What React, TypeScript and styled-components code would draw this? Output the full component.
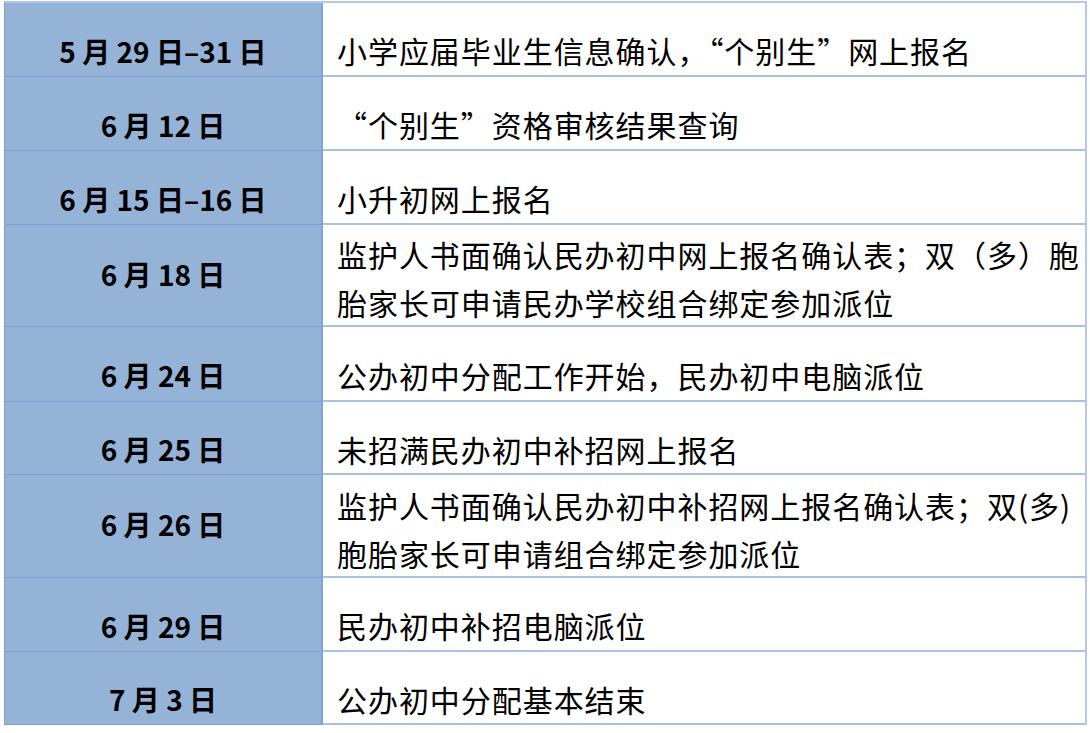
import React from "react";
import styled, { createGlobalStyle } from "styled-components";

const Global = createGlobalStyle`
  html, body { margin: 0; padding: 0; background: #ffffff; }
  body { font-family: "Noto Sans CJK SC", "Noto Sans", sans-serif; color: #000; }
`;

const Page = styled.div`
  width: 1090px;
  height: 733px;
  padding: 1px 3px 0 4px;
  box-sizing: border-box;
  background: #ffffff;
`;

const Table = styled.div`
  display: flex;
  flex-direction: column;
  border-top: 2px solid #b4c7e7;
  border-right: 2px solid #b4c7e7;
  border-left: 1px solid #7ea3d2;
`;

const Row = styled.div<{ $h: number }>`
  display: grid;
  grid-template-columns: 318px 1fr;
  grid-template-rows: ${(p) => p.$h}px;
  height: ${(p) => p.$h}px;
  overflow: hidden;
`;

const DateCell = styled.div<{ $two?: boolean }>`
  box-sizing: border-box;
  min-height: 0;
  background: #95b3d7;
  border-right: 2px solid #7ea3d2;
  border-bottom: 1px solid #7a9fd0;
  display: flex;
  align-items: center;
  justify-content: center;
  padding-top: ${(p) => (p.$two ? 0 : 22)}px;
  padding-bottom: ${(p) => (p.$two ? 4 : 0)}px;
  font-size: 28px;
  font-weight: 700;
  line-height: 50px;
  white-space: pre;
`;

const TaskCell = styled.div<{ $two?: boolean }>`
  box-sizing: border-box;
  min-height: 0;
  border-bottom: 2px solid #a9c0e3;
  display: flex;
  flex-direction: column;
  justify-content: center;
  padding-left: 14px;
  padding-top: ${(p) => (p.$two ? 6 : 22)}px;
  font-size: 30px;
  letter-spacing: 0.95px;
  line-height: ${(p) => (p.$two ? 48 : 50)}px;
`;

const Line = styled.div`
  white-space: nowrap;
`;

type Item = { date: string; lines: string[]; h: number };

const items: Item[] = [
  { date: "5 月 29 日–31 日", lines: ["小学应届毕业生信息确认，“个别生”网上报名"], h: 74 },
  { date: "6 月 12 日", lines: ["“个别生”资格审核结果查询"], h: 74 },
  { date: "6 月 15 日–16 日", lines: ["小升初网上报名"], h: 74 },
  {
    date: "6 月 18 日",
    lines: ["监护人书面确认民办初中网上报名确认表；双（多）胞", "胎家长可申请民办学校组合绑定参加派位"],
    h: 102,
  },
  { date: "6 月 24 日", lines: ["公办初中分配工作开始，民办初中电脑派位"], h: 75 },
  { date: "6 月 25 日", lines: ["未招满民办初中补招网上报名"], h: 73 },
  {
    date: "6 月 26 日",
    lines: ["监护人书面确认民办初中补招网上报名确认表；双(多)", "胞胎家长可申请组合绑定参加派位"],
    h: 103,
  },
  { date: "6 月 29 日", lines: ["民办初中补招电脑派位"], h: 74 },
  { date: "7 月 3 日", lines: ["公办初中分配基本结束"], h: 73 },
];

export default function App() {
  return (
    <>
      <Global />
      <Page>
        <Table>
          {items.map((it, i) => {
            const two = it.lines.length > 1;
            return (
              <Row key={i} $h={it.h}>
                <DateCell $two={two}>{it.date}</DateCell>
                <TaskCell $two={two}>
                  {it.lines.map((l, j) => (
                    <Line key={j}>{l}</Line>
                  ))}
                </TaskCell>
              </Row>
            );
          })}
        </Table>
      </Page>
    </>
  );
}
